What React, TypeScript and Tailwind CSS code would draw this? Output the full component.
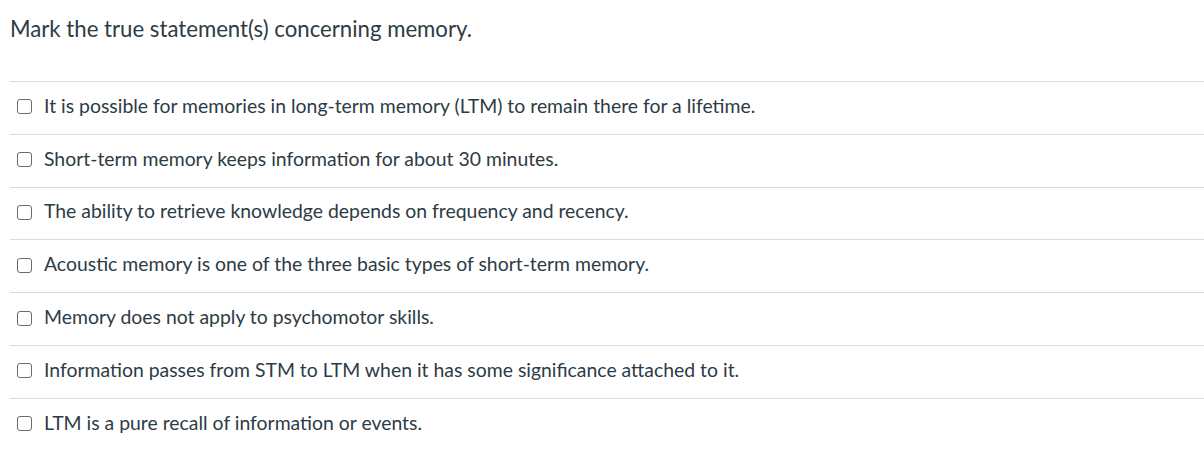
import React from 'react';

const options = [
  'It is possible for memories in long-term memory (LTM) to remain there for a lifetime.',
  'Short-term memory keeps information for about 30 minutes.',
  'The ability to retrieve knowledge depends on frequency and recency.',
  'Acoustic memory is one of the three basic types of short-term memory.',
  'Memory does not apply to psychomotor skills.',
  'Information passes from STM to LTM when it has some significance attached to it.',
  'LTM is a pure recall of information or events.',
];

export default function App() {
  return (
    <div className="w-[1204px] h-[451px] overflow-hidden bg-white text-[#2d3b45]" style={{ fontFamily: 'Lato, "Open Sans", sans-serif' }}>
      <div className="pl-[10px] pt-[14px] h-[81px]">
        <p className="text-[22.2px] leading-[30px]">Mark the true statement(s) concerning memory.</p>
      </div>
      <div className="ml-[10px]">
        {options.map((opt) => (
          <label key={opt} className="flex items-center h-[52.8px] border-t border-[#dcdcdc] pl-[7px] pb-[4px]">
            <span className="w-[15px] h-[15px] rounded-[3px] border-[1.5px] border-[#6b6b6b] bg-white shrink-0 mt-[2px]" />
            <span className="ml-[12px] text-[19.4px] leading-[26px]">{opt}</span>
          </label>
        ))}
      </div>
    </div>
  );
}
